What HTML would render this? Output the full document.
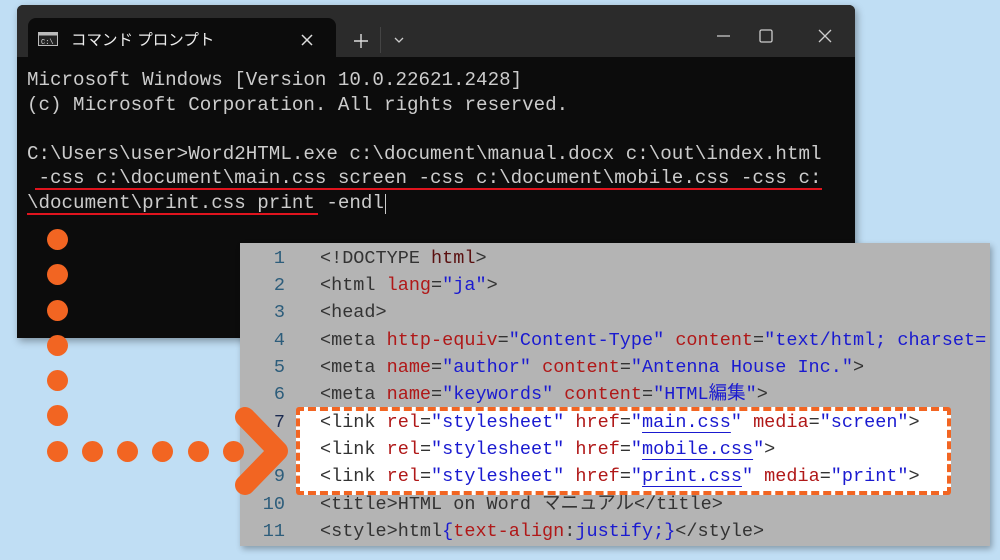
<!DOCTYPE html>
<html><head><meta charset="utf-8"><style>
*{margin:0;padding:0;box-sizing:border-box}
body{width:1000px;height:560px;background:#c0def4;position:relative;overflow:hidden;font-family:"Liberation Sans","Noto Sans CJK JP",sans-serif}
.term{position:absolute;left:17px;top:5px;width:838px;height:333px;background:#0c0c0c;box-shadow:2px 3px 8px rgba(0,0,0,.35);border-radius:6px 6px 0 0;overflow:hidden}
.bar{position:absolute;left:0;top:0;width:100%;height:52px;background:#2b2b2b}
.tab{position:absolute;left:11px;top:13px;width:308px;height:40px;background:#0c0c0c;border-radius:8px 8px 0 0}
.tt{position:absolute;color:#eee;font-size:15.5px}
.tl{position:absolute;left:10px;font-family:"Liberation Mono",monospace;font-size:19.2px;color:#cccccc;white-space:pre;line-height:24.5px}
.ed{position:absolute;left:240px;top:243px;width:750px;height:303px;background:#b4b4b4;box-shadow:2px 3px 6px rgba(0,0,0,.3);overflow:hidden}
.row{position:absolute;left:0;height:27px;width:100%;font-family:"Liberation Mono","Noto Sans CJK JP",monospace;font-size:18.5px;white-space:pre;line-height:27px;color:#333}
.n{position:absolute;left:0;width:45px;text-align:right;color:#2d5d7b}
.c{position:absolute;left:80px}
.a{color:#b01818}.v{color:#1a1ad0}.t{color:#5a1010}
.u{text-decoration:underline;text-decoration-color:#1a1ad0;text-underline-offset:5px}
.box{position:absolute;left:296px;top:407px;width:655px;height:88px;background:#fff;border:4px dashed #f26522;border-radius:3px}
.dot{position:absolute;width:21px;height:21px;border-radius:50%;background:#f26522}
.ul{position:absolute;height:2px;background:#e0141e}
</style></head><body>
<div class="term">
<div class="bar"></div>
<div class="tab"></div>
<svg style="position:absolute;left:21px;top:27px" width="20" height="14"><rect x="0.5" y="0.5" width="19" height="13" fill="#222" stroke="#bbb"/><rect x="0.5" y="0.5" width="19" height="3" fill="#bbb"/><text x="3" y="12" font-size="7" fill="#ddd" font-family="Liberation Mono">C:\</text></svg>
<div class="tt" style="left:54px;top:23px">コマンド プロンプト</div>
<svg style="position:absolute;left:284px;top:29px" width="12" height="12"><path d="M1 1L11 11M11 1L1 11" stroke="#ddd" stroke-width="1.5"/></svg>
<svg style="position:absolute;left:337px;top:29px" width="14" height="14"><path d="M7 0V14M0 7H14" stroke="#ddd" stroke-width="1.4"/></svg>
<div style="position:absolute;left:363px;top:22px;width:1px;height:26px;background:#444"></div>
<svg style="position:absolute;left:377px;top:32px" width="10" height="7"><path d="M1 1L5 5L9 1" stroke="#ccc" stroke-width="1.3" fill="none"/></svg>
<svg style="position:absolute;left:700px;top:30px" width="13" height="2"><path d="M0 1H13" stroke="#ccc" stroke-width="1.3"/></svg>
<svg style="position:absolute;left:742px;top:24px" width="14" height="14"><rect x="1" y="1" width="12" height="12" rx="1.5" fill="none" stroke="#ccc" stroke-width="1.3"/></svg>
<svg style="position:absolute;left:801px;top:24px" width="14" height="14"><path d="M1 1L13 13M13 1L1 13" stroke="#ccc" stroke-width="1.3"/></svg>
<div class="tl" style="top:63px">Microsoft Windows [Version 10.0.22621.2428]
(c) Microsoft Corporation. All rights reserved.

C:\Users\user&gt;Word2HTML.exe c:\document\manual.docx c:\out\index.html
 -css c:\document\main.css screen -css c:\document\mobile.css -css c:
\document\print.css print -endl</div>
<div style="position:absolute;left:368px;top:189px;width:1px;height:20px;background:#ccc"></div>
<div class="ul" style="left:18px;top:183px;width:787px"></div>
<div class="ul" style="left:10px;top:208px;width:291px"></div>
</div>
<div class="ed">
<div class="row" style="top:2px"><span class="n">1</span><span class="c">&lt;!DOCTYPE <span class="t">html</span>&gt;</span></div>
<div class="row" style="top:29px"><span class="n">2</span><span class="c">&lt;html <span class="a">lang</span>=<span class="v">"ja"</span>&gt;</span></div>
<div class="row" style="top:56px"><span class="n">3</span><span class="c">&lt;head&gt;</span></div>
<div class="row" style="top:84px"><span class="n">4</span><span class="c">&lt;meta <span class="a">http-equiv</span>=<span class="v">"Content-Type"</span> <span class="a">content</span>=<span class="v">"text/html; charset=</span></span></div>
<div class="row" style="top:111px"><span class="n">5</span><span class="c">&lt;meta <span class="a">name</span>=<span class="v">"author"</span> <span class="a">content</span>=<span class="v">"Antenna House Inc."</span>&gt;</span></div>
<div class="row" style="top:138px"><span class="n">6</span><span class="c">&lt;meta <span class="a">name</span>=<span class="v">"keywords"</span> <span class="a">content</span>=<span class="v">"HTML編集"</span>&gt;</span></div>
</div>
<div class="box"></div>
<div class="ed" style="background:transparent;box-shadow:none">
<div class="row" style="top:166px"><span class="n" style="color:#1a2a50">7</span><span class="c">&lt;link <span class="a">rel</span>=<span class="v">"stylesheet"</span> <span class="a">href</span>=<span class="v">"<span class="u">main.css</span>"</span> <span class="a">media</span>=<span class="v">"screen"</span>&gt;</span></div>
<div class="row" style="top:193px"><span class="c">&lt;link <span class="a">rel</span>=<span class="v">"stylesheet"</span> <span class="a">href</span>=<span class="v">"<span class="u">mobile.css</span>"</span>&gt;</span></div>
<div class="row" style="top:220px"><span class="n">9</span><span class="c">&lt;link <span class="a">rel</span>=<span class="v">"stylesheet"</span> <span class="a">href</span>=<span class="v">"<span class="u">print.css</span>"</span> <span class="a">media</span>=<span class="v">"print"</span>&gt;</span></div>
<div class="row" style="top:248px"><span class="n">10</span><span class="c">&lt;title&gt;HTML on Word マニュアル&lt;/title&gt;</span></div>
<div class="row" style="top:275px"><span class="n">11</span><span class="c">&lt;style&gt;html<span class="v">{</span><span class="a">text-align</span>:<span class="v">justify;}</span>&lt;/style&gt;</span></div>
</div>
<div class="dot" style="left:47px;top:229px"></div>
<div class="dot" style="left:47px;top:264px"></div>
<div class="dot" style="left:47px;top:300px"></div>
<div class="dot" style="left:47px;top:335px"></div>
<div class="dot" style="left:47px;top:370px"></div>
<div class="dot" style="left:47px;top:405px"></div>
<div class="dot" style="left:47px;top:441px"></div>
<div class="dot" style="left:82px;top:441px"></div>
<div class="dot" style="left:117px;top:441px"></div>
<div class="dot" style="left:152px;top:441px"></div>
<div class="dot" style="left:188px;top:441px"></div>
<div class="dot" style="left:223px;top:441px"></div>
<svg style="position:absolute;left:230px;top:405px" width="60" height="92"><path d="M15 12L48 46L15 80" stroke="#f26522" stroke-width="20" stroke-linecap="round" stroke-linejoin="round" fill="none"/></svg>
</body></html>
